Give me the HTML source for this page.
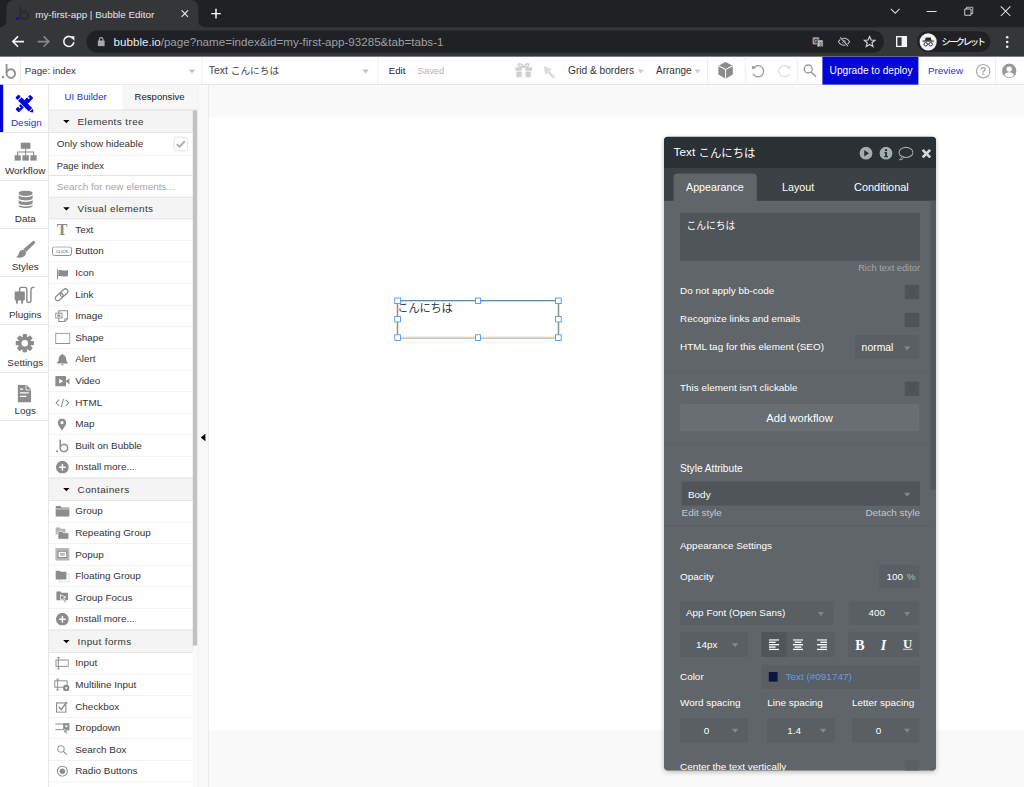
<!DOCTYPE html>
<html lang="ja">
<head>
<meta charset="utf-8">
<title>my-first-app | Bubble Editor</title>
<style>
*{box-sizing:border-box;margin:0;padding:0}
html,body{width:1024px;height:787px;overflow:hidden;background:#fff}
body{font-family:"Liberation Sans","Noto Sans CJK JP",sans-serif;color:#333}
#root{position:absolute;left:0;top:0;width:1280px;height:984px;transform:scale(.8);transform-origin:0 0;overflow:hidden;background:#fff;font-size:13px}
.abs{position:absolute}
svg{display:block}
/* ---------- browser chrome ---------- */
#chrome{position:absolute;left:0;top:0;width:1280px;height:70.5px;background:#35363a}
#tabstrip{position:absolute;left:0;top:0;width:1280px;height:34px;background:#202124}
#tab{position:absolute;left:8px;top:0;width:240px;height:35px;background:#35363a;border-radius:10px 10px 0 0}
#tab .title{position:absolute;left:36px;top:9px;line-height:18px;font-size:12.3px;color:#e4e6e9;white-space:nowrap}
#urlpill{position:absolute;left:108px;top:38px;width:997px;height:28px;border-radius:14px;background:#202124}
#url{position:absolute;left:34px;top:4px;line-height:20px;font-size:14.5px;color:#9aa0a6;white-space:nowrap}
#url b{font-weight:normal;color:#e8eaed}
#incog{position:absolute;left:1146px;top:39px;width:92px;height:26px;;border-radius:14px;background:#202124}
#incog span{position:absolute;left:31px;top:3px;line-height:20px;font-size:11.500px;letter-spacing:-2.700px;font-weight:500;color:#f1f3f4;white-space:nowrap;font-family:"Liberation Sans","Noto Sans CJK JP",sans-serif}
/* ---------- bubble top bar ---------- */
#topbar{position:absolute;left:0;top:70.5px;width:1280px;height:35.5px;background:#fff;border-bottom:1px solid #ddd}
#topbar .t{position:absolute;top:8px;line-height:20px;font-size:12.3px;white-space:nowrap;color:#333}
#topbar .vd{position:absolute;top:0;width:1px;height:34px;background:#e8e8e8}
.caret{position:absolute;width:0;height:0;border-left:4.5px solid transparent;border-right:4.5px solid transparent;border-top:5px solid #bcc3ca}
.cj{font-size:.96em;position:relative;top:-1px}
/* ---------- left nav ---------- */
#nav{position:absolute;left:0;top:106px;width:61px;height:878px;background:#fff;border-right:1px solid #ddd}
.nv{position:absolute;left:0;width:60px;height:60px;border-bottom:1px solid #ddd}
.nv .lb{position:absolute;left:-8.5px;width:80px;top:40px;text-align:center;font-size:12.4px;color:#333;white-space:nowrap}
.nv svg{position:absolute}
/* ---------- palette ---------- */
#pal{position:absolute;left:61px;top:106px;width:186px;height:878px;background:#fff;overflow:hidden}
#pal .row{position:absolute;left:0;width:180px;height:27px;border-bottom:1px solid #efefef;font-size:12.4px;color:#333;white-space:nowrap}
#pal .ptab{top:8px;text-align:center;font-size:12px;white-space:nowrap}
#pal .row .tx{position:absolute;left:33px;top:0}
#pal .hd{position:absolute;left:0;width:180px;height:27px;background:#f4f4f4;border-bottom:1px solid #e0e0e0;box-shadow:0 -1px 0 #e0e0e0;font-size:12.4px;letter-spacing:.5px;color:#333;white-space:nowrap}
#pal .hd .tx{position:absolute;left:36px;top:.8px}
#pal .hd i{position:absolute;left:17.5px;top:10px;margin-top:.5px;width:0;height:0;border-left:4.5px solid transparent;border-right:4.5px solid transparent;border-top:4.5px solid #000}
#pal .ic{position:absolute;left:6px;top:4px;width:20px;height:18px}
/* ---------- canvas ---------- */
#gutter{position:absolute;left:247px;top:106px;width:14px;height:878px;background:#f9f9f9;border-right:1px solid #e3e3e3;border-left:1px solid #ededed}
#canvas{position:absolute;left:261px;top:106px;width:1019px;height:878px;background:#f9f9f9}
#page{position:absolute;left:0;top:40px;width:1019px;height:767px;background:#fff}
#sel{position:absolute;left:235.5px;top:269.5px;width:201px;height:46px;border:1px solid #f3b36c;box-shadow:0 0 0 1px #4b7b9c}
#sel .txt{position:absolute;left:-.5px;top:-.5px;font-size:14px;line-height:19px;color:#2a3350;white-space:nowrap;letter-spacing:-.3px;font-family:"Liberation Sans","Noto Sans CJK JP",sans-serif}
#sel i{position:absolute;width:7.5px;height:7.5px;background:#fff;border:1.5px solid #3f83f8}
/* ---------- property panel ---------- */
#pp{position:absolute;left:830px;top:171px;width:340px;height:792px;background:#5f6568;border-radius:5px;overflow:hidden;box-shadow:0 2px 7px rgba(0,0,0,.26);color:#fff;font-size:13px}
#pp .hdr{position:absolute;left:0;top:0;width:340px;height:39px;background:#2a3033}
#pp .tabs{position:absolute;left:0;top:39px;width:340px;height:41px;background:#3b4144}
#pp .lbl{position:absolute;white-space:nowrap;color:#fff;font-size:13px}
#pp .box{position:absolute;background:#4f5558}
#pp .cb{position:absolute;left:301px;width:18px;height:18px;background:#4a4e51}
#pp .sep{position:absolute;left:0;width:333px;height:1px;background:#595f62}
#pp .car{position:absolute;width:0;height:0;border-left:4.5px solid transparent;border-right:4.5px solid transparent;border-top:5px solid #8d9194}
</style>
</head>
<body>
<div id="root">
<div id="chrome">
  <div id="tabstrip">
    <div id="tab">
      <svg class="abs" style="left:-8px;top:26px" width="9" height="9" viewBox="0 0 9 9"><path d="M8 0H9V9H0V8A8 8 0 0 0 8 0Z" fill="#35363a"/></svg>
      <svg class="abs" style="left:239px;top:26px" width="9" height="9" viewBox="0 0 9 9"><path d="M0 0H1V9H9V8A8 8 0 0 1 1 0Z" fill="#35363a"/></svg>
      <svg class="abs" style="left:11px;top:8px" width="19" height="18" viewBox="0 0 19 18"><circle cx="2.800" cy="15.200" r="1.700" fill="#0205d3"/><path d="M6.500 0.500v15.500M6.500 11a4.800 4.800 0 1 1 0 .1" fill="none" stroke="#28292c" stroke-width="2"/></svg>
      <div class="title">my-first-app | Bubble Editor</div>
      <svg class="abs" style="left:217px;top:11px" width="12" height="12" viewBox="0 0 12 12"><path d="M2 2l8 8M10 2l-8 8" stroke="#e8eaed" stroke-width="1.5" fill="none"/></svg>
    </div>
    <svg class="abs" style="left:263px;top:10px" width="14" height="14" viewBox="0 0 14 14"><path d="M7 1v12M1 7h12" stroke="#fff" stroke-width="1.8" fill="none"/></svg>
    <svg class="abs" style="left:1112px;top:9px" width="14" height="10" viewBox="0 0 14 10"><path d="M1.5 2l5.500 5.500L12.500 2" stroke="#d5d6d8" stroke-width="1.300" fill="none"/></svg>
    <svg class="abs" style="left:1158px;top:13px" width="13" height="3" viewBox="0 0 13 3"><path d="M0 1.500h13" stroke="#e2e3e5" stroke-width="1.300"/></svg>
    <svg class="abs" style="left:1205px;top:8px" width="12" height="12" viewBox="0 0 13 13"><path d="M1 3.500h8.500v8.500h-8.500zM3.500 3.500v-2.500h8.500v8.500h-2.500" stroke="#e2e3e5" stroke-width="1.200" fill="none"/></svg>
    <svg class="abs" style="left:1250px;top:7px" width="14" height="14" viewBox="0 0 14 14"><path d="M1 1l12 12M13 1l-12 12" stroke="#e8eaed" stroke-width="1.300" fill="none"/></svg>
  </div>
  <svg class="abs" style="left:14px;top:44px" width="17" height="16" viewBox="0 0 17 16"><path d="M16 8H2.500M8.500 1.500L2 8l6.500 6.500" stroke="#f1f3f4" stroke-width="2" fill="none"/></svg>
  <svg class="abs" style="left:46px;top:44px" width="17" height="16" viewBox="0 0 17 16"><path d="M1 8h13.500M8.500 1.500L15 8l-6.500 6.500" stroke="#85878b" stroke-width="2" fill="none"/></svg>
  <svg class="abs" style="left:77px;top:43px" width="18" height="18" viewBox="0 0 18 18"><path d="M14.200 5.200A6.300 6.300 0 1 0 15.300 9.600" stroke="#f1f3f4" stroke-width="2" fill="none"/><path d="M10.300 2.200h5.700v5.700z" fill="#f1f3f4"/></svg>
  <div id="urlpill">
    <svg class="abs" style="left:13.500px;top:8px" width="9" height="12" viewBox="0 0 10 13"><rect x="0" y="5" width="10" height="8" rx="1" fill="#a5a9ae"/><path d="M2.500 5.500V3.500a2.500 2.500 0 0 1 5 0v2" stroke="#a5a9ae" stroke-width="1.600" fill="none"/></svg>
    <div id="url"><b>bubble.io</b>/page?name=index&amp;id=my-first-app-93285&amp;tab=tabs-1</div>
    <svg class="abs" style="left:907px;top:6.500px" width="15" height="15" viewBox="0 0 20 20"><rect x="1" y="2" width="11" height="12" rx="1.500" fill="#9b9fa4"/><rect x="8.500" y="6.500" width="10" height="12" rx="1.500" fill="#c3c6ca" stroke="#202124" stroke-width="1"/><text x="3.300" y="11.500" font-size="8" font-weight="bold" fill="#202124" font-family="Liberation Sans, sans-serif">G</text><text x="10.500" y="16" font-size="8" fill="#202124" font-family="Noto Sans CJK JP, sans-serif">文</text></svg>
    <svg class="abs" style="left:939px;top:7px" width="16" height="14.500" viewBox="0 0 22 20"><path d="M1.500 10C4 5.800 7.200 4 11 4s7 1.800 9.500 6c-2.500 4.200-5.700 6-9.500 6s-7-1.800-9.500-6z" fill="none" stroke="#c3c6ca" stroke-width="1.800"/><circle cx="11" cy="10" r="3" fill="#c3c6ca"/><path d="M4 2.500l14 15" stroke="#202124" stroke-width="4"/><path d="M4.500 2.500l13.500 15" stroke="#c3c6ca" stroke-width="1.800"/></svg>
    <svg class="abs" style="left:971px;top:6px" width="16" height="16" viewBox="0 0 20 20"><path d="M10 2l2.400 5.500 5.900.5-4.500 3.900 1.400 5.800L10 14.600 4.800 17.700l1.400-5.800L1.700 8l5.900-.5z" fill="none" stroke="#cfd2d5" stroke-width="1.900" stroke-linejoin="miter"/></svg>
  </div>
  <svg class="abs" style="left:1120px;top:45px" width="14" height="14" viewBox="0 0 16 16"><rect x="1" y="1" width="14" height="14" fill="none" stroke="#f1f3f4" stroke-width="2"/><rect x="8" y="1" width="7" height="14" fill="#f1f3f4"/></svg>
  <div id="incog">
    <svg class="abs" style="left:2.500px;top:2px" width="22.500" height="22.500" viewBox="0 0 24 24"><circle cx="12" cy="12" r="11.500" fill="#f1f3f4"/><path d="M7.500 10.500l1.200-4.300h6.600l1.200 4.300z" fill="#2a2b2e"/><rect x="4.500" y="10.300" width="15" height="1.500" fill="#2a2b2e"/><circle cx="8.700" cy="15.300" r="2.300" fill="none" stroke="#2a2b2e" stroke-width="1.300"/><circle cx="15.300" cy="15.300" r="2.300" fill="none" stroke="#2a2b2e" stroke-width="1.300"/><path d="M11 15h2" stroke="#2a2b2e" stroke-width="1.200"/></svg>
    <span>シークレット</span>
  </div>
  <svg class="abs" style="left:1255.500px;top:44px" width="6" height="18" viewBox="0 0 6 18"><circle cx="3" cy="2.500" r="1.600" fill="#f1f3f4"/><circle cx="3" cy="8.500" r="1.600" fill="#f1f3f4"/><circle cx="3" cy="14.500" r="1.600" fill="#f1f3f4"/></svg>
</div>

<div id="topbar">
  <svg class="abs" style="left:2px;top:8px" width="20" height="20" viewBox="0 0 20 20"><rect x="0.500" y="16" width="2.600" height="2.600" fill="#8f8f8f"/><path d="M6.200 1v12.500a5.400 5.400 0 1 0 0-1.200" fill="none" stroke="#8f8f8f" stroke-width="2.300"/></svg>
  <div class="vd" style="left:25px"></div>
  <div class="t" style="font-size:12.1px;left:31px">Page: index</div>
  <div class="caret" style="left:235.500px;top:16px"></div>
  <div class="vd" style="left:252px"></div>
  <div class="t" style="left:261px;font-size:13px;top:8.300px;color:#444">Text <span class="cj" style="font-size:.93em;top:0">こんにちは</span></div>
  <div class="caret" style="left:453px;top:16px"></div>
  <div class="vd" style="left:472px"></div>
  <div class="t" style="font-size:12px;left:486px;color:#222">Edit</div>
  <div class="t" style="font-size:11.8px;left:522px;color:#b3b3b3">Saved</div>
  <svg class="abs" style="left:644px;top:7px" width="21" height="19" viewBox="0 0 21 19"><path d="M0 6h21v4.500H0zM1.500 11.500h18V19h-18z" fill="#cfcfcf"/><rect x="8.200" y="6" width="4.600" height="13" fill="#fff"/><path d="M10.500 6C8 1 3.500.5 4 3.500c.3 2 3.500 2.500 6.500 2.500zM10.500 6C13 1 17.500.5 17 3.500c-.3 2-3.500 2.500-6.500 2.500z" fill="none" stroke="#cfcfcf" stroke-width="1.800"/></svg>
  <svg class="abs" style="left:679px;top:11px" width="16" height="16" viewBox="0 0 16 16"><path d="M0.500 0.500l10.500 3.800-3.500 2.300 7.500 7.500-2.200 2.200-7.500-7.500-2.300 3.500z" fill="#dcdcdc"/></svg>
  <div class="t" style="font-size:12.7px;left:710px">Grid &amp; borders</div>
  <div class="caret" style="left:796.500px;top:16px;border-top-color:#c9cfd6"></div>
  <div class="t" style="font-size:12.5px;left:820px">Arrange</div>
  <div class="caret" style="left:868px;top:16px;border-top-color:#c9cfd6"></div>
  <div class="vd" style="left:884px"></div>
  <svg class="abs" style="left:897px;top:6.500px" width="20" height="22" viewBox="0 0 20 21" preserveAspectRatio="none"><path d="M10 0.500l9 4.500v10.500l-9 5-9-5V5z" fill="#8a8a8a"/><path d="M1 5l9 4.500 9-4.500M10 9.500v11" fill="none" stroke="#fff" stroke-width="1.200"/></svg>
  <div class="vd" style="left:931px"></div>
  <svg class="abs" style="left:938px;top:8px" width="19" height="19" viewBox="0 0 19 19"><path d="M3.600 6.300a7 7 0 1 1 -0.400 6.800" fill="none" stroke="#9a9a9a" stroke-width="1.600"/><path d="M1.500 2.800l1 5.200 4.600-2.200z" fill="#9a9a9a"/></svg>
  <svg class="abs" style="left:971px;top:8px" width="19" height="19" viewBox="0 0 19 19"><path d="M15.400 6.300a7 7 0 1 0 0.400 6.800" fill="none" stroke="#dcdcdc" stroke-width="1.600"/><path d="M17.500 2.800l-1 5.200-4.600-2.200z" fill="#dcdcdc"/></svg>
  <div class="vd" style="left:996px"></div>
  <svg class="abs" style="left:1003px;top:8.500px" width="20" height="20" viewBox="0 0 20 20"><circle cx="7.300" cy="7.300" r="5" fill="none" stroke="#9a9a9a" stroke-width="1.700"/><path d="M11 11l6 6" stroke="#9a9a9a" stroke-width="2"/></svg>
  <div class="abs" style="left:1028px;top:0;width:120px;height:35px;background:#0205d3"></div>
  <div class="t" style="font-size:12.7px;left:1037px;color:#fff">Upgrade to deploy</div>
  <div class="t" style="font-size:12.3px;left:1160px;color:#2b2fd6">Preview</div>
  <svg class="abs" style="left:1219px;top:8px" width="20" height="20" viewBox="0 0 20 20"><circle cx="10" cy="10" r="8.400" fill="none" stroke="#a9a9a9" stroke-width="1.500"/><text x="10" y="14.500" text-anchor="middle" font-size="13" font-weight="bold" fill="#a9a9a9" font-family="Liberation Sans, sans-serif">?</text></svg>
  <div class="vd" style="left:1244px"></div>
  <svg class="abs" style="left:1252px;top:8px" width="19" height="19" viewBox="0 0 19 19"><circle cx="9.500" cy="9.500" r="9" fill="#999"/><circle cx="9.500" cy="7.300" r="3.300" fill="#fff"/><path d="M3.500 15.200c.8-3 3-4 6-4s5.200 1 6 4a8.500 8.500 0 0 1-12 0z" fill="#fff"/></svg>
</div>

<div id="nav">
  <div class="nv" style="top:0">
    <div class="abs" style="left:0;top:0;width:4px;height:59px;background:#0205d3"></div>
    <svg style="left:19px;top:12px" width="23" height="23" viewBox="0 0 22 22"><g transform="translate(11 11) rotate(-45)"><rect x="-12.300" y="-2.800" width="24.600" height="5.600" rx=".800" fill="#0205d3"/><g fill="#fff"><rect x="-8" y="-3" width="1.700" height="3.100"/><rect x="7.400" y="-3" width="1.700" height="3.100"/></g></g><g transform="translate(11 11) rotate(45)"><rect x="-8.700" y="-3.800" width="20" height="7.600" fill="#fff"/><rect x="-12.700" y="-2.900" width="3.800" height="5.800" rx="1.300" fill="#0205d3"/><rect x="-7.700" y="-2.900" width="18" height="5.800" fill="#0205d3"/><path d="M11.400 -2.900v5.800l4.200-2.900z" fill="#0205d3"/></g><g transform="translate(11 11) rotate(-45)"><rect x="2.600" y="-2.800" width="4" height="5.600" fill="#0205d3"/></g></svg>
    <div class="lb" style="color:#2b2fd6;left:-7px">Design</div>
  </div>
  <div class="nv" style="top:60px">
    <svg style="left:18px;top:12px" width="28" height="23" viewBox="0 0 28 23"><g fill="#8c8c8c"><rect x="8" y="0" width="12" height="8"/><rect x="0" y="16" width="8" height="7"/><rect x="10" y="16" width="8" height="7"/><rect x="20" y="16" width="8" height="7"/></g><path d="M14 8v8M4 16v-4h20v4" fill="none" stroke="#8c8c8c" stroke-width="1.400"/></svg>
    <div class="lb">Workflow</div>
  </div>
  <div class="nv" style="top:120px">
    <svg style="left:23px;top:12px" width="18" height="22" viewBox="0 0 18 22"><g fill="#8c8c8c"><ellipse cx="9" cy="3.500" rx="9" ry="3.500"/><path d="M0 5.500c0 4 18 4 18 0v4c0 4-18 4-18 0z"/><path d="M0 11.500c0 4 18 4 18 0v4c0 4-18 4-18 0z"/><path d="M0 17.300c0 3.700 18 3.700 18 0v1.500c0 4.200-18 4.200-18 0z"/></g></svg>
    <div class="lb">Data</div>
  </div>
  <div class="nv" style="top:180px">
    <svg style="left:20px;top:14px" width="25" height="23" viewBox="0 0 25 23"><path d="M22 0.500l2.500 2.500L12.500 15l-3.300-3.300z" fill="#8c8c8c"/><path d="M8 12.500c3-0.500 5.500 2.500 4 5.500-1.800 3.500-7 5-12 3.500 3-1.500 3-3.500 4-6 .7-1.800 2-2.700 4-3z" fill="#8c8c8c"/></svg>
    <div class="lb">Styles</div>
  </div>
  <div class="nv" style="top:240px">
    <svg style="left:18px;top:12px" width="26" height="22" viewBox="0 0 26 22"><g fill="#8c8c8c"><rect x="0" y="6.500" width="13" height="11" rx="1"/><rect x="2" y="17" width="2.400" height="4.500"/><rect x="8.500" y="17" width="2.400" height="4.500"/></g><path d="M6.500 7V3.500a2.500 2.500 0 0 1 2.500-2.500h4a2.500 2.500 0 0 1 2.500 2.500V17.500a2.600 2.600 0 0 0 5.200 0V4a3 3 0 0 1 3-3h1.500" fill="none" stroke="#8c8c8c" stroke-width="1.800"/></svg>
    <div class="lb">Plugins</div>
  </div>
  <div class="nv" style="top:300px">
    <svg style="left:19px;top:11px" width="24" height="24" viewBox="0 0 24 24"><g transform="translate(12 12)" fill="#8c8c8c"><g id="gt"><rect x="-2.700" y="-11.500" width="5.400" height="23" rx="1"/></g><rect x="-2.700" y="-11.500" width="5.400" height="23" rx="1" transform="rotate(45)"/><rect x="-2.700" y="-11.500" width="5.400" height="23" rx="1" transform="rotate(90)"/><rect x="-2.700" y="-11.500" width="5.400" height="23" rx="1" transform="rotate(135)"/><circle r="8.300"/><circle r="4" fill="#fff"/></g></svg>
    <div class="lb">Settings</div>
  </div>
  <div class="nv" style="top:360px">
    <svg style="left:22px;top:15px" width="17" height="22" viewBox="0 0 17 22"><path d="M1 0h10l6 6v15a1 1 0 0 1-1 1H1a1 1 0 0 1-1-1V1a1 1 0 0 1 1-1z" fill="#8c8c8c"/><path d="M10.500 0.500v6h6" fill="none" stroke="#fff" stroke-width="1"/><path d="M3 5.500h4M3 10h11M3 14.500h8" stroke="#fff" stroke-width="1.500"/></svg>
    <div class="lb">Logs</div>
  </div>
</div>

<div id="pal">
<div class="abs" style="left:0;top:0;width:186px;height:32px;background:#f7f7f7;border-bottom:1px solid #e2e2e2"></div>
<div class="abs" style="left:0;top:0;width:92px;height:32px;background:#fff"></div>
<div class="abs ptab" style="left:0;width:92px;color:#2b2fd6">UI Builder</div>
<div class="abs ptab" style="left:92px;width:93px;color:#222">Responsive</div>
<div class="hd" style="top:32px;height:28px;line-height:27px"><i style="top:11.5px"></i><span class="tx">Elements tree</span></div>
<div class="row" style="top:60px;height:29px;line-height:28px"><span class="tx" style="left:10px">Only show hideable</span><div class="abs" style="left:156px;top:5px;width:18px;height:18px;border:1px solid #ddd;border-radius:3px;background:#fff"><svg class="abs" style="left:2px;top:3px" width="12" height="10" viewBox="0 0 12 10"><path d="M1 5l3.500 3.500L11 1.500" fill="none" stroke="#a8a8a8" stroke-width="2.200"/></svg></div></div>
<div class="row" style="top:89px;height:25px;line-height:24px;border-bottom-color:#ddd"><span class="tx" style="left:10px;font-size:11.8px">Page index</span></div>
<div class="row" style="top:114px;height:27px;line-height:26px"><span class="tx" style="left:10px;color:#a6a6a6">Search for new elements...</span></div>
<div class="hd" style="top:141px;height:27px;line-height:26px"><i style="top:11.0px"></i><span class="tx">Visual elements</span></div>
<div class="row" style="top:168px;height:27px;line-height:26px"><div class="abs" style="left:10px;top:0;font:bold 20px 'Liberation Serif',serif;color:#8c8c8c;line-height:26px">T</div><span class="tx">Text</span></div>
<div class="row" style="top:195px;height:27px;line-height:26px"><svg class="abs" style="left:4px;top:7px" width="25" height="12" viewBox="0 0 25 12"><rect x="0.6" y="0.6" width="23.8" height="10.8" rx="2.5" fill="#fff" stroke="#8c8c8c" stroke-width="1.2"/><text x="12.5" y="8" text-anchor="middle" font-size="5" font-weight="bold" fill="#8c8c8c" font-family="Liberation Sans, sans-serif">CLICK</text></svg><span class="tx">Button</span></div>
<div class="row" style="top:222px;height:27px;line-height:26px"><svg class="abs" style="left:9.5px;top:7.5px" width="14" height="13" viewBox="0 0 14 13"><path d="M0.800 0.500v12.500" stroke="#8c8c8c" stroke-width="1.400"/><path d="M2 2c3-1.500 5 1.500 12-.500v7.500c-7 2-9-1-12 .500z" fill="#8c8c8c"/></svg><span class="tx">Icon</span></div>
<div class="row" style="top:249px;height:27px;line-height:26px"><svg class="abs" style="left:7px;top:5px" width="18" height="17" viewBox="0 0 18 17"><g fill="none" stroke="#8c8c8c" stroke-width="1.6"><rect x="-5.500" y="-3.100" width="11" height="6.200" rx="3.100" transform="translate(6 11.200) rotate(-42)"/><rect x="-5.500" y="-3.100" width="11" height="6.200" rx="3.100" transform="translate(12 5.800) rotate(-42)"/></g></svg><span class="tx">Link</span></div>
<div class="row" style="top:276px;height:27px;line-height:26px"><svg class="abs" style="left:8.0px;top:5.4px" width="17" height="16" viewBox="0 0 17 16"><path d="M4.500 1.500h11v10l-3.500 3.500h-7.500z" fill="#fff" stroke="#8c8c8c" stroke-width="1.300"/><path d="M12 15v-3.500h3.500" fill="none" stroke="#8c8c8c" stroke-width="1.200"/><rect x="0.500" y="4.500" width="8" height="6" fill="#fff" stroke="#8c8c8c" stroke-width="1.200"/><rect x="2.500" y="6.300" width="4" height="2.500" fill="#8c8c8c"/></svg><span class="tx">Image</span></div>
<div class="row" style="top:303px;height:27px;line-height:26px"><svg class="abs" style="left:7.5px;top:7px" width="19" height="14" viewBox="0 0 19 14"><rect x="0.600" y="0.600" width="17.800" height="12.800" fill="#fff" stroke="#8c8c8c" stroke-width="1.200"/></svg><span class="tx">Shape</span></div>
<div class="row" style="top:330px;height:27px;line-height:26px"><svg class="abs" style="left:9.5px;top:5.9px" width="14" height="15" viewBox="0 0 14 15"><path d="M7 0.500c.8 0 1.300.5 1.300 1.300 2.200.600 3.400 2.400 3.400 5 0 2.500.8 3.700 2 4.700v.800H.3v-.800c1.200-1 2-2.200 2-4.700 0-2.600 1.200-4.400 3.400-5C5.700 1 6.200.5 7 .5z" fill="#8c8c8c"/><path d="M5.300 13.200a1.700 1.700 0 0 0 3.400 0z" fill="#8c8c8c"/></svg><span class="tx">Alert</span></div>
<div class="row" style="top:357px;height:27px;line-height:26px"><svg class="abs" style="left:7.5px;top:6.9px" width="18" height="13" viewBox="0 0 18 13"><rect x="0" y="0" width="13.500" height="13" rx="1.500" fill="#8c8c8c"/><path d="M13 6.500l5-4v8z" fill="#8c8c8c"/><path d="M5 3.500l5 3-5 3z" fill="#fff"/></svg><span class="tx">Video</span></div>
<div class="row" style="top:384px;height:27px;line-height:26px"><svg class="abs" style="left:7.5px;top:7.9px" width="18" height="11" viewBox="0 0 18 11"><path d="M5 1.500L1 5.500l4 4M13 1.500l4 4-4 4M10.500 0.500l-3 10" fill="none" stroke="#8c8c8c" stroke-width="1.300"/></svg><span class="tx">HTML</span></div>
<div class="row" style="top:411px;height:27px;line-height:26px"><svg class="abs" style="left:11.0px;top:5.9px" width="11" height="15" viewBox="0 0 11 15"><path d="M5.500 0a5.300 5.300 0 0 1 5.300 5.300c0 3.200-3.300 6.200-5.300 9.700C3.500 11.500.2 8.500.2 5.300A5.300 5.300 0 0 1 5.500 0z" fill="#8c8c8c"/><circle cx="5.500" cy="5.200" r="2" fill="#fff"/></svg><span class="tx">Map</span></div>
<div class="row" style="top:438px;height:27px;line-height:26px"><svg class="abs" style="left:8.5px;top:4.9px" width="16" height="17" viewBox="0 0 16 17"><rect x="0.300" y="14" width="2.200" height="2.200" fill="#8c8c8c"/><path d="M5.300 0.500v11a4.700 4.700 0 1 0 0-1" fill="none" stroke="#8c8c8c" stroke-width="1.900"/></svg><span class="tx">Built on Bubble</span></div>
<div class="row" style="top:465px;height:27px;line-height:26px"><svg class="abs" style="left:8.5px;top:5.4px" width="16" height="16" viewBox="0 0 16 16"><circle cx="8" cy="8" r="8" fill="#8c8c8c"/><path d="M8 4v8M4 8h8" stroke="#fff" stroke-width="1.800"/></svg><span class="tx">Install more...</span></div>
<div class="hd" style="top:492px;height:28px;line-height:27px"><i style="top:11.5px"></i><span class="tx">Containers</span></div>
<div class="row" style="top:520px;height:27px;line-height:26px"><svg class="abs" style="left:7.5px;top:6.4px" width="18" height="14" viewBox="0 0 18 14"><path d="M0.500 1.500a1 1 0 0 1 1-1h5l1.500 2h9a1 1 0 0 1 1 1V13a1 1 0 0 1-1 1h-15.500a1 1 0 0 1-1-1z" fill="#8c8c8c"/><path d="M0.500 4.200h17" stroke="#fff" stroke-width="0.800"/></svg><span class="tx">Group</span></div>
<div class="row" style="top:547px;height:27px;line-height:26px"><svg class="abs" style="left:8.0px;top:5.9px" width="17" height="15" viewBox="0 0 17 15"><path d="M0.500 1a.8.8 0 0 1 .8-.8h4l1.200 1.600h5.500a.8.800 0 0 1 .8.800v6.500H0.500z" fill="#b5b5b5"/><path d="M3.500 6a.8.800 0 0 1 .8-.800h4.200l1.300 1.700h6.400a.8.800 0 0 1 .8.800V14.200a.8.800 0 0 1-.8.800H4.300a.8.800 0 0 1-.8-.8z" fill="#8c8c8c" stroke="#fff" stroke-width="0.800"/></svg><span class="tx">Repeating Group</span></div>
<div class="row" style="top:574px;height:27px;line-height:26px"><svg class="abs" style="left:7.5px;top:5.4px" width="18" height="16" viewBox="0 0 18 16"><rect x="0" y="0" width="18" height="16" rx="1" fill="#b9b9b9"/><rect x="3.500" y="4" width="11" height="8" fill="#fff" stroke="#8c8c8c" stroke-width="1.400"/><rect x="6" y="6.300" width="6" height="3.400" fill="#b9b9b9"/></svg><span class="tx">Popup</span></div>
<div class="row" style="top:601px;height:27px;line-height:26px"><svg class="abs" style="left:7.5px;top:5.9px" width="18" height="15" viewBox="0 0 18 15"><rect x="5.500" y="4.500" width="12" height="10" fill="#fff" stroke="#aaa" stroke-width="1" stroke-dasharray="1.500 1.500"/><path d="M0.500 1a.8.800 0 0 1 .8-.8h4.200l1.300 1.600h6.400a.8.800 0 0 1 .8.800V10.500a.8.800 0 0 1-.8.800H1.300a.8.800 0 0 1-.8-.8z" fill="#8c8c8c"/></svg><span class="tx">Floating Group</span></div>
<div class="row" style="top:628px;height:27px;line-height:26px"><svg class="abs" style="left:8.5px;top:5.4px" width="16" height="16" viewBox="0 0 16 16"><path d="M0.500 1a.8.800 0 0 1 .8-.8h4.200l1.300 1.600h7.400a.8.800 0 0 1 .8.800V10.500a.8.800 0 0 1-.8.800H1.300a.8.800 0 0 1-.8-.8z" fill="#8c8c8c"/><path d="M5.500 4.500l7 3-3 1 3.500 5-1.700 1.200-3.300-5-2 2.300z" fill="#8c8c8c" stroke="#fff" stroke-width="1"/></svg><span class="tx">Group Focus</span></div>
<div class="row" style="top:655px;height:27px;line-height:26px"><svg class="abs" style="left:8.5px;top:5.4px" width="16" height="16" viewBox="0 0 16 16"><circle cx="8" cy="8" r="8" fill="#8c8c8c"/><path d="M8 4v8M4 8h8" stroke="#fff" stroke-width="1.800"/></svg><span class="tx">Install more...</span></div>
<div class="hd" style="top:682px;height:28px;line-height:27px"><i style="top:11.5px"></i><span class="tx">Input forms</span></div>
<div class="row" style="top:710px;height:27px;line-height:26px"><svg class="abs" style="left:6px;top:5.4px" width="19" height="16" viewBox="0 0 19 16"><rect x="3" y="4" width="15.400" height="8" fill="#fff" stroke="#8c8c8c" stroke-width="1.200"/><path d="M6 0.600v14.800M4 0.600h4M4 15.400h4" stroke="#8c8c8c" stroke-width="1.200" fill="none"/><rect x="0" y="4" width="4" height="8" fill="#fff" opacity="0"/></svg><span class="tx">Input</span></div>
<div class="row" style="top:737px;height:27px;line-height:26px"><svg class="abs" style="left:6px;top:5.4px" width="20" height="16" viewBox="0 0 20 16"><rect x="1.500" y="3" width="15.400" height="8" fill="#fff" stroke="#8c8c8c" stroke-width="1.200"/><path d="M5 0.600v13.800M3 0.600h4M3 14.400h4" stroke="#8c8c8c" stroke-width="1.200" fill="none"/><circle cx="15.800" cy="12" r="4" fill="#8c8c8c"/><circle cx="15.800" cy="12" r="1.300" fill="#fff"/></svg><span class="tx">Multiline Input</span></div>
<div class="row" style="top:764px;height:27px;line-height:26px"><svg class="abs" style="left:9.0px;top:5.9px" width="15" height="15" viewBox="0 0 15 15"><rect x="0.700" y="2.700" width="11.600" height="11.600" fill="#fff" stroke="#8c8c8c" stroke-width="1.400"/><path d="M3.500 7.500l3 3.500 7-9.500" fill="none" stroke="#8c8c8c" stroke-width="1.800"/></svg><span class="tx">Checkbox</span></div>
<div class="row" style="top:791px;height:27px;line-height:26px"><svg class="abs" style="left:7.5px;top:5.9px" width="18" height="15" viewBox="0 0 18 15"><path d="M0 2h11M0 9h11" stroke="#8c8c8c" stroke-width="1.200"/><rect x="10" y="1" width="8" height="9" fill="#8c8c8c"/><path d="M11.800 4l2.200 2.700L16.200 4z" fill="#fff"/><path d="M11 8.500l5 2.500-2 .8 1.500 2.500-1.200.7-1.500-2.600-1.500 1.500z" fill="#8c8c8c" stroke="#fff" stroke-width="0.600"/></svg><span class="tx">Dropdown</span></div>
<div class="row" style="top:818px;height:27px;line-height:26px"><svg class="abs" style="left:10.0px;top:6.9px" width="13" height="13" viewBox="0 0 13 13"><circle cx="5.200" cy="5.200" r="4.200" fill="none" stroke="#8c8c8c" stroke-width="1.200"/><path d="M8.300 8.300l4 4" stroke="#8c8c8c" stroke-width="1.400"/></svg><span class="tx">Search Box</span></div>
<div class="row" style="top:845px;height:27px;line-height:26px"><svg class="abs" style="left:9.5px;top:6.4px" width="14" height="14" viewBox="0 0 14 14"><circle cx="7" cy="7" r="6.200" fill="#fff" stroke="#8c8c8c" stroke-width="1.300"/><circle cx="7" cy="7" r="3.400" fill="#8c8c8c"/></svg><span class="tx">Radio Buttons</span></div>
<div class="abs" style="left:180px;top:32px;width:6px;height:846px;background:#fafafa"></div>
<div class="abs" style="left:180px;top:32px;width:6px;height:669px;background:#c1c1c1"></div>
</div>

<div id="gutter"><svg class="abs" style="left:3px;top:436px" width="6" height="10" viewBox="0 0 6 10"><path d="M6 0v10L0 5z" fill="#000"/></svg></div>
<div id="canvas">
  <div id="page"></div>
  <div id="sel">
    <div class="txt">こんにちは</div>
    <i style="left:-4.5px;top:-4.5px"></i><i style="left:96px;top:-4.5px"></i><i style="left:196.5px;top:-4.5px"></i>
    <i style="left:-4.5px;top:18.7px"></i><i style="left:196.5px;top:18.7px"></i>
    <i style="left:-4.5px;top:41.5px"></i><i style="left:96px;top:41.5px"></i><i style="left:196.5px;top:41.5px"></i>
  </div>
</div>

<div id="pp">
<div class="hdr"></div><div class="tabs"></div>
<div class="abs" style="left:12px;top:46px;width:104px;height:35px;background:#5f6568;border-radius:5px 5px 0 0"></div>
<div class="lbl" style="left:12px;top:9.2px;line-height:20px;font-size:14.8px;color:#fff;">Text <span class="cj" style="top:.5px">こんにちは</span></div>
<svg class="abs" style="left:244px;top:12px" width="17" height="17" viewBox="0 0 17 17"><circle cx="8.5" cy="8.5" r="8" fill="#a5adb1"/><path d="M6.300 4.500l6 4-6 4z" fill="#2a3033"/></svg>
<svg class="abs" style="left:269px;top:12px" width="17" height="17" viewBox="0 0 17 17"><circle cx="8.5" cy="8.5" r="8" fill="#a5adb1"/><circle cx="8.500" cy="4.600" r="1.500" fill="#2a3033"/><path d="M6.500 7h3.300v5h1.200v1.500H6.200V12h1.300V8.500H6.500z" fill="#2a3033"/></svg>
<svg class="abs" style="left:292px;top:12px" width="20" height="18" viewBox="0 0 20 18"><ellipse cx="10.500" cy="7.500" rx="8.700" ry="6.300" fill="none" stroke="#a5adb1" stroke-width="1.300"/><path d="M5 12.500c0 2-1 3.300-2.800 4.300 2.800 0 4.800-1.200 6-3.300z" fill="#2a3033" stroke="#a5adb1" stroke-width="1.200"/></svg>
<svg class="abs" style="left:321px;top:14px" width="14" height="14" viewBox="0 0 14 14"><path d="M2.300 2.300l9.400 9.400M11.700 2.300l-9.400 9.400" stroke="#d3d9dc" stroke-width="3.400" fill="none"/></svg>
<div class="lbl" style="left:27.5px;top:53.5px;line-height:20px;font-size:13.4px;color:#fff;">Appearance</div>
<div class="lbl" style="left:147.5px;top:53.5px;line-height:20px;font-size:13.4px;color:#fff;">Layout</div>
<div class="lbl" style="left:237.5px;top:53.5px;line-height:20px;font-size:13.7px;color:#fff;">Conditional</div>
<div class="box" style="left:333px;top:80px;width:7px;height:713px;background:#5f6568;"></div>
<div class="box" style="left:333px;top:80px;width:7px;height:361px;background:#53595c;"></div>
<div class="box" style="left:20px;top:95px;width:300px;height:60px;background:#4f5558;"></div>
<div class="lbl" style="left:28px;top:100.5px;line-height:20px;font-size:12.2px;color:#fff;">こんにちは</div>
<div class="lbl" style="right:20px;top:153.5px;line-height:20px;font-size:11.6px;color:#a4a8ab;">Rich text editor</div>
<div class="lbl" style="left:20px;top:182.7px;line-height:20px;font-size:12.4px;color:#fff;">Do not apply bb-code</div>
<div class="box" style="left:301px;top:185px;width:18px;height:18px;background:#4d5356;"></div>
<div class="lbl" style="left:20px;top:217.5px;line-height:20px;font-size:12.4px;color:#fff;">Recognize links and emails</div>
<div class="box" style="left:301px;top:220px;width:18px;height:18px;background:#4d5356;"></div>
<div class="lbl" style="left:20px;top:252.7px;line-height:20px;font-size:12.4px;color:#fff;">HTML tag for this element (SEO)</div>
<div class="box" style="left:239px;top:248px;width:80px;height:29px;background:#595f62;"></div>
<div class="lbl" style="left:247px;top:254.0px;line-height:20px;font-size:13px;color:#fff;">normal</div>
<div class="car" style="left:299.5px;top:261.5px;border-top-color:#84888b"></div>
<div class="sep" style="top:293px"></div>
<div class="lbl" style="left:20px;top:303.6px;line-height:20px;font-size:12.4px;color:#fff;">This element isn&#39;t clickable</div>
<div class="box" style="left:301px;top:306px;width:18px;height:18px;background:#4d5356;"></div>
<div class="box" style="left:20px;top:334px;width:299px;height:34px;background:#686e71;border:1px solid #70747780;border-radius:2px"></div>
<div class="lbl" style="left:20px;width:299px;text-align:center;top:340.5px;line-height:20px;font-size:14px">Add workflow</div>
<div class="sep" style="top:384px"></div>
<div class="lbl" style="left:20px;top:404.7px;line-height:20px;font-size:12.7px;color:#fff;">Style Attribute</div>
<div class="box" style="left:22px;top:431px;width:298px;height:30px;background:#4f5558;"></div>
<div class="lbl" style="left:30px;top:437.4px;line-height:20px;font-size:12.4px;color:#fff;">Body</div>
<div class="car" style="left:300.1px;top:444.5px;border-top-color:#84888b"></div>
<div class="lbl" style="left:22px;top:460.4px;line-height:20px;font-size:12.4px;color:#c6c9cb;">Edit style</div>
<div class="lbl" style="right:20px;top:460.4px;line-height:20px;font-size:12.4px;color:#c6c9cb;">Detach style</div>
<div class="sep" style="top:486px"></div>
<div class="lbl" style="left:20px;top:500.7px;line-height:20px;font-size:12.4px;color:#fff;">Appearance Settings</div>
<div class="lbl" style="left:20px;top:539.5px;line-height:20px;font-size:12.4px;color:#fff;">Opacity</div>
<div class="box" style="left:269px;top:534.5px;width:50px;height:29.5px;background:#595f62;"></div>
<div class="lbl" style="left:278px;top:539.5px;line-height:20px;font-size:12.4px;color:#fff;">100</div>
<div class="lbl" style="left:303.5px;top:539.5px;line-height:20px;font-size:12.4px;color:#b4b8bb;">%</div>
<div class="box" style="left:20px;top:579.5px;width:192px;height:30px;background:#595f62;"></div>
<div class="lbl" style="left:27.5px;top:585.4px;line-height:20px;font-size:12.4px;color:#fff;">App Font (Open Sans)</div>
<div class="car" style="left:192.1px;top:593.5px;border-top-color:#84888b"></div>
<div class="box" style="left:230.5px;top:579.5px;width:88.5px;height:30px;background:#595f62;"></div>
<div class="lbl" style="left:255.5px;top:585.4px;line-height:20px;font-size:12.4px;color:#fff;">400</div>
<div class="car" style="left:300.1px;top:593.5px;border-top-color:#84888b"></div>
<div class="box" style="left:20px;top:619px;width:85px;height:30.5px;background:#595f62;"></div>
<div class="lbl" style="left:40px;top:624.5px;line-height:20px;font-size:12.4px;color:#fff;">14px</div>
<div class="car" style="left:85.1px;top:632.5px;border-top-color:#84888b"></div>
<div class="box" style="left:122px;top:619px;width:90.5px;height:30.5px;background:#595f62;"></div>
<div class="box" style="left:122px;top:619px;width:30.5px;height:30.5px;background:#4f5558;"></div>
<svg class="abs" style="left:131.0px;top:628px" width="13" height="14" viewBox="0 0 13 14"><rect x="0" y="0.0" width="13" height="1.700" fill="#fff"/><rect x="0" y="3.0" width="8.5" height="1.700" fill="#fff"/><rect x="0" y="6.0" width="13" height="1.700" fill="#fff"/><rect x="0" y="9.0" width="8.5" height="1.700" fill="#fff"/><rect x="0" y="12.0" width="13" height="1.700" fill="#fff"/></svg>
<svg class="abs" style="left:161.0px;top:628px" width="13" height="14" viewBox="0 0 13 14"><rect x="0.0" y="0.0" width="13" height="1.700" fill="#fff"/><rect x="2.25" y="3.0" width="8.5" height="1.700" fill="#fff"/><rect x="0.0" y="6.0" width="13" height="1.700" fill="#fff"/><rect x="2.25" y="9.0" width="8.5" height="1.700" fill="#fff"/><rect x="0.0" y="12.0" width="13" height="1.700" fill="#fff"/></svg>
<svg class="abs" style="left:191.0px;top:628px" width="13" height="14" viewBox="0 0 13 14"><rect x="0" y="0.0" width="13" height="1.700" fill="#fff"/><rect x="4.5" y="3.0" width="8.5" height="1.700" fill="#fff"/><rect x="0" y="6.0" width="13" height="1.700" fill="#fff"/><rect x="4.5" y="9.0" width="8.5" height="1.700" fill="#fff"/><rect x="0" y="12.0" width="13" height="1.700" fill="#fff"/></svg>
<div class="box" style="left:229.8px;top:619px;width:89.5px;height:30.5px;background:#595f62;"></div>
<div class="lbl" style="left:234.9px;width:20px;text-align:center;top:625px;line-height:24px;font:bold 17.500px 'Liberation Serif',serif;color:#fff">B</div>
<div class="lbl" style="left:264.2px;width:20px;text-align:center;top:625px;line-height:24px;font:italic bold 17.500px 'Liberation Serif',serif;color:#fff">I</div>
<div class="lbl" style="left:294.600px;width:20px;text-align:center;top:625px;line-height:24px;font:bold 16px 'Liberation Serif',serif;color:#fff;text-decoration:underline">U</div>
<div class="lbl" style="left:20px;top:664.9px;line-height:20px;font-size:12.4px;color:#fff;">Color</div>
<div class="box" style="left:122px;top:660px;width:197.5px;height:29.5px;background:#595f62;"></div>
<div class="box" style="left:130.5px;top:669px;width:11.5px;height:11.5px;background:#091747;"></div>
<div class="lbl" style="left:152px;top:664.9px;line-height:20px;font-size:12.4px;color:#5b9cf0;">Text (#091747)</div>
<div class="lbl" style="left:20px;top:697.7px;line-height:20px;font-size:12.4px;color:#fff;">Word spacing</div>
<div class="lbl" style="left:129px;top:697.7px;line-height:20px;font-size:12.4px;color:#fff;">Line spacing</div>
<div class="lbl" style="left:235px;top:697.7px;line-height:20px;font-size:12.4px;color:#fff;">Letter spacing</div>
<div class="box" style="left:20px;top:726.5px;width:85px;height:30px;background:#595f62;"></div>
<div class="box" style="left:129px;top:726.5px;width:85px;height:30px;background:#595f62;"></div>
<div class="box" style="left:235px;top:726.5px;width:84px;height:30px;background:#595f62;"></div>
<div class="lbl" style="left:43px;width:20px;text-align:center;top:731.5px;line-height:20px;font-size:12.4px">0</div>
<div class="lbl" style="left:147.6px;width:30px;text-align:center;top:731.5px;line-height:20px;font-size:12.4px">1.4</div>
<div class="lbl" style="left:258px;width:20px;text-align:center;top:731.5px;line-height:20px;font-size:12.4px">0</div>
<div class="car" style="left:85.1px;top:739.5px;border-top-color:#84888b"></div>
<div class="car" style="left:194.5px;top:739.5px;border-top-color:#84888b"></div>
<div class="car" style="left:300.1px;top:739.5px;border-top-color:#84888b"></div>
<div class="lbl" style="left:20px;top:776.5px;line-height:20px;font-size:12.4px;color:#fff;">Center the text vertically</div>
<div class="box" style="left:301px;top:778.5px;width:18px;height:18px;background:#595f62;"></div>
</div>

</div>
</body>
</html>
